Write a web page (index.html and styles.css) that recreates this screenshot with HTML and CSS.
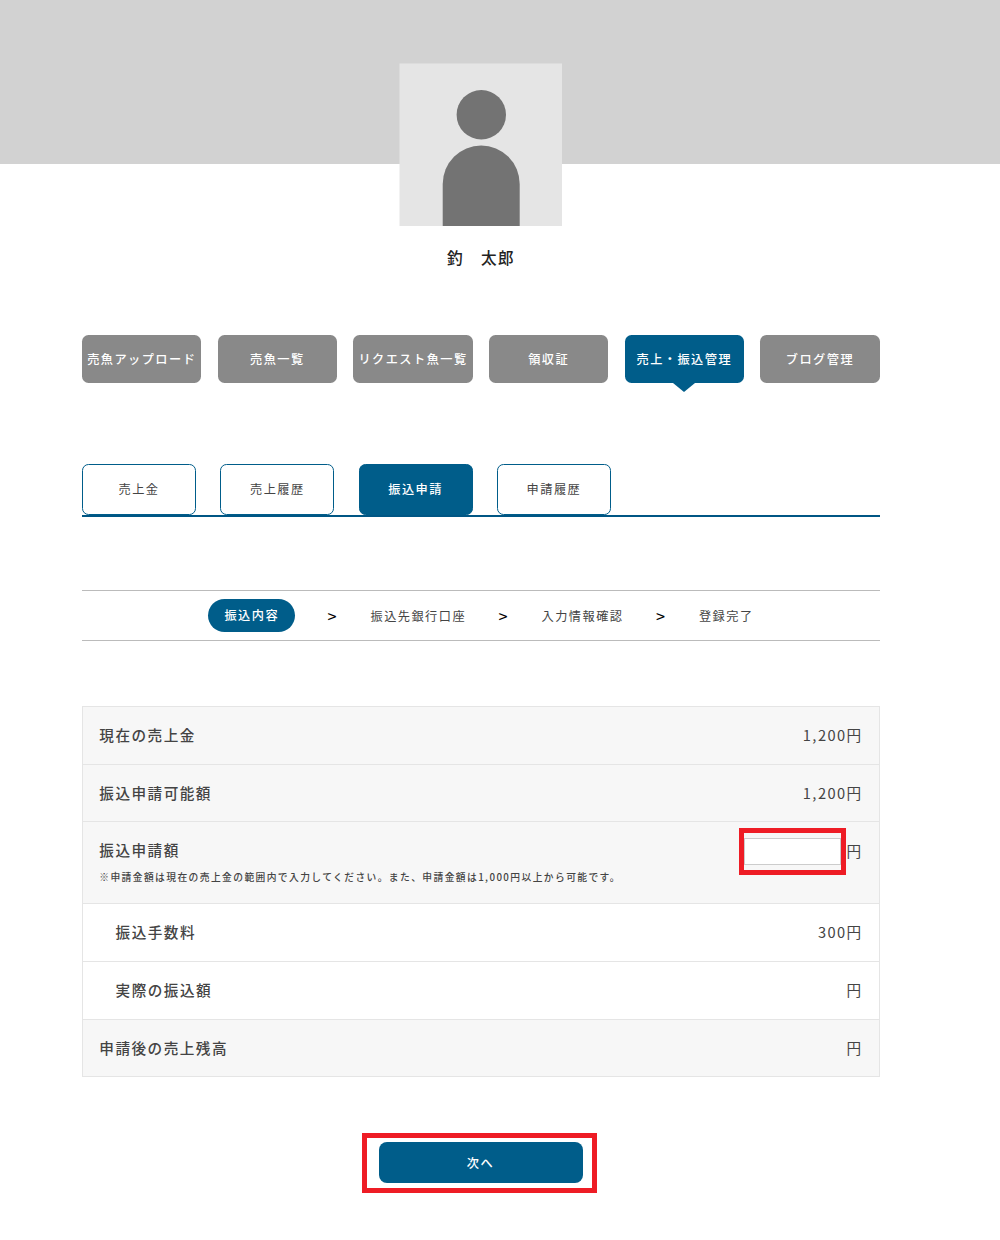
FILE: index.html
```html
<!DOCTYPE html>
<html lang="ja">
<head>
<meta charset="utf-8">
<title>振込申請</title>
<link rel="stylesheet" href="styles.css">
</head>
<body>
<header class="cover">
  <svg class="avatar" viewBox="0 0 163 163" aria-hidden="true">
    <rect x="0.500" y="0.500" width="162.500" height="162.500" fill="#e5e5e5"/>
    <circle cx="82.300" cy="51.700" r="24.700" fill="#737373"/>
    <path d="M43.700 163v-42a38.500 38.500 0 0 1 77 0V163z" fill="#737373"/>
  </svg>
</header>
<main class="page">
  <h1 class="name">釣　太郎</h1>
  <nav class="menu">
    <a class="menu-item">売魚アップロード</a>
    <a class="menu-item">売魚一覧</a>
    <a class="menu-item">リクエスト魚一覧</a>
    <a class="menu-item">領収証</a>
    <a class="menu-item menu-item-active">売上・振込管理</a>
    <a class="menu-item">ブログ管理</a>
  </nav>
  <nav class="tabs">
    <a class="tab">売上金</a>
    <a class="tab">売上履歴</a>
    <a class="tab tab-active">振込申請</a>
    <a class="tab">申請履歴</a>
  </nav>
  <div class="steps">
    <span class="step-active">振込内容</span>
    <span class="arrow">&gt;</span>
    <span>振込先銀行口座</span>
    <span class="arrow">&gt;</span>
    <span>入力情報確認</span>
    <span class="arrow">&gt;</span>
    <span>登録完了</span>
  </div>
  <dl class="summary">
    <div class="row"><dt>現在の売上金</dt><dd>1,200円</dd></div>
    <div class="row"><dt>振込申請可能額</dt><dd>1,200円</dd></div>
    <div class="row row-request">
      <dt>振込申請額<small class="note">※申請金額は現在の売上金の範囲内で入力してください。また、申請金額は1,000円以上から可能です。</small></dt>
      <dd class="amount"><span class="highlight"><input class="amount-input" type="text" aria-label="振込申請額"></span>円</dd>
    </div>
    <div class="row row-detail"><dt>振込手数料</dt><dd>300円</dd></div>
    <div class="row row-detail"><dt>実際の振込額</dt><dd>円</dd></div>
    <div class="row"><dt>申請後の売上残高</dt><dd>円</dd></div>
  </dl>
  <div class="submit"><button class="next" type="button">次へ</button></div>
</main>
</body>
</html>
```
FILE: styles.css
```css
* { box-sizing: border-box; }
body {
  margin: 0;
  background: #fff;
  color: #444;
  font-family: "Noto Sans CJK JP", sans-serif;
  font-size: 12.2px;
  letter-spacing: 1.46px;
}
.cover {
  height: 164px;
  padding: 63px 0 0 399px;
  background: #d2d2d2;
}
.avatar { display: block; width: 163px; height: 163px; }
.page { width: 798px; margin-left: 82px; }
.name {
  margin: 81px 0 0;
  color: #222;
  font-size: 15.600px;
  font-weight: 500;
  line-height: 24px;
  text-align: center;
}
.menu {
  display: grid;
  grid-template-columns: repeat(6, 1fr);
  gap: 16.200px;
  width: 797.700px;
  margin-top: 66px;
}
.menu-item {
  position: relative;
  display: flex;
  align-items: center;
  justify-content: center;
  height: 48px;
  border-radius: 6.500px;
  background: #898989;
  color: #fff;
  font-weight: 500;
  white-space: nowrap;
}
.menu-item-active { background: #005d8a; }
.menu-item-active::after {
  content: "";
  position: absolute;
  top: 100%;
  left: calc(50% - 11px);
  border: 11px solid transparent;
  border-top: 9px solid #005d8a;
  border-bottom: 0;
}
.tabs {
  display: flex;
  gap: 24.300px;
  margin-top: 81px;
  border-bottom: 2px solid #005684;
}
.tab {
  display: flex;
  align-items: center;
  justify-content: center;
  width: 114px;
  height: 51px;
  padding-bottom: 1px;
  border: 1px solid #005d8a;
  border-radius: 6.500px;
}
.tab-active { background: #005d8a; color: #fff; font-weight: 500; }
.steps {
  display: flex;
  align-items: center;
  justify-content: center;
  gap: 32.500px;
  height: 51px;
  margin-top: 73px;
  border: solid #bbb;
  border-width: 1px 0;
}
.step-active {
  padding: 0 16px;
  border-radius: 17px;
  background: #005d8a;
  color: #fff;
  font-weight: 500;
  line-height: 33px;
}
.arrow {
  color: #000;
  font-size: 16.300px;
  line-height: 24px;
}
.summary {
  margin: 65px 0 0;
  border: 1px solid #e5e5e5;
  font-size: 14.640px;
}
.row {
  display: flex;
  justify-content: space-between;
  height: 57.700px;
  padding: 16px 16.300px 0;
  border-bottom: 1px solid #e5e5e5;
  background: #f7f7f7;
  line-height: 24px;
}
.row:last-child { height: 56.200px; border-bottom: 0; }
.row dt { font-weight: 500; }
.row dd { margin: 0; }
.row-request { height: 82px; }
.row-detail { padding-left: 32.600px; background: #fff; }
.note {
  display: block;
  margin-top: 5px;
  font-size: 9.760px;
  letter-spacing: 1.410px;
  line-height: 20px;
}
.amount { display: flex; padding-top: 1px; }
.highlight {
  display: flex;
  align-items: center;
  width: 107px;
  height: 47px;
  margin: -11px 1px 0 0;
  border: 5px solid #ee1c25;
}
.amount-input {
  width: 97px;
  height: 27px;
  padding: 0 4px;
  border: 1px solid #ccc;
  background: #fff;
  font: inherit;
}
.submit {
  display: flex;
  align-items: center;
  justify-content: center;
  width: 235px;
  height: 60px;
  margin: 56px 0 0 280px;
  padding: 0 0 1px 2px;
  border: 5px solid #ee1c25;
}
.next {
  width: 204px;
  height: 41px;
  padding: 1px 0 0;
  border: 0;
  border-radius: 8px;
  background: #005d8a;
  color: #fff;
  font: inherit;
  font-weight: 500;
  letter-spacing: inherit;
}
```
